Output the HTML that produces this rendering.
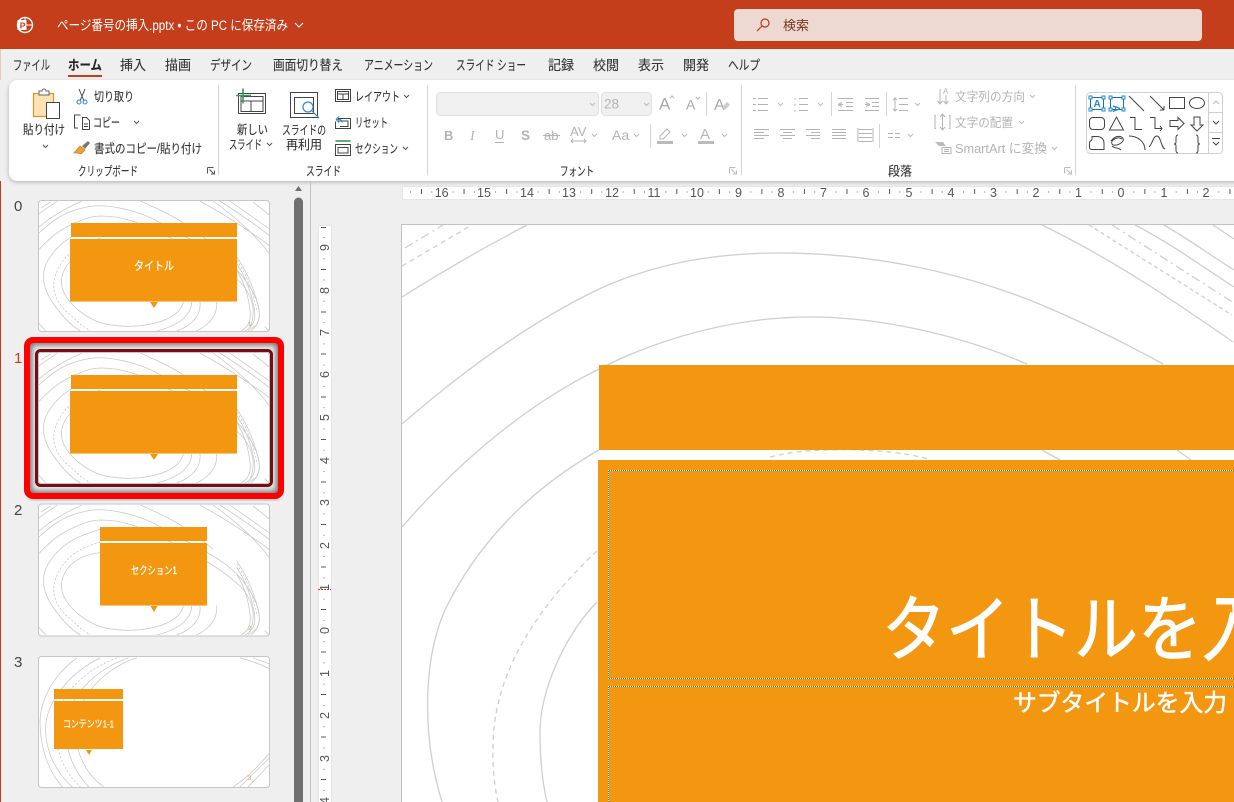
<!DOCTYPE html>
<html lang="ja"><head><meta charset="utf-8"><title>PowerPoint</title>
<style>
html,body{margin:0;padding:0;width:1234px;height:802px;overflow:hidden;background:#efefef}
svg{position:absolute;left:0;top:0;display:block}
text{font-family:"Liberation Sans","Noto Sans CJK JP",sans-serif;font-size:12.500px;fill:#333;stroke:#333;stroke-width:.12}
.tb{font-size:13.500px}
.d{fill:#b4b4b4;stroke:none}
.w{fill:#fff;stroke:none}
.n{font-size:12.500px;fill:#555;stroke:none}
.th{fill:#fff;stroke:#fff;stroke-width:.25}
.i{fill:none;stroke:#444;stroke-width:1}
.g{fill:none;stroke:#b4b4b4;stroke-width:1}
.c{fill:none;stroke:#555;stroke-width:1}
.cg{fill:none;stroke:#bbb;stroke-width:1}
.sp{fill:none;stroke:#cfcfcf;stroke-width:1.3}
.tc path{fill:none;stroke:#c8c8c8;stroke-width:2.300}
.dash{stroke-dasharray:7 5}
.o{fill:#f39610}
</style></head><body>
<svg width="1234" height="802" viewBox="0 0 1234 802" xmlns="http://www.w3.org/2000/svg">
<defs>
<filter id="sh" x="-10%" y="-15%" width="120%" height="130%"><feGaussianBlur stdDeviation="3"/></filter>
<filter id="rs" x="-2%" y="-20%" width="104%" height="140%"><feGaussianBlur stdDeviation="2"/></filter>
<clipPath id="inner"><rect x="27" y="340" width="254" height="156" rx="6"/></clipPath>
<symbol id="c1" viewBox="115 47 693 391" class="tc">
<path d="M115,143C150,110 180,90 209,79C240,68 270,61 293,61C330,61 380,70 421,85C450,95 480,110 520,135C600,180 690,215 740,290C775,340 790,390 770,420L745,438"/>
<path d="M115,193C140,165 175,135 210,119C240,105 265,93 300,92C340,92 380,100 416,114C520,160 650,220 730,300C760,340 770,380 750,430"/>
<path d="M300,120C265,130 235,140 210,156C180,175 150,205 135,240C120,280 130,320 165,365C190,400 215,425 240,438"/>
<path class="dash" d="M300,158C265,168 235,180 209,204C185,225 165,255 160,290C155,325 175,365 215,395C235,415 255,430 270,438"/>
<path d="M300,190C260,195 235,205 209,229C190,250 180,275 183,300C190,350 260,410 330,420C420,435 540,410 550,350"/>
<path d="M575,350C575,385 545,420 470,438M600,350C605,395 570,425 530,438M650,350C655,395 620,425 590,438M711,215C745,265 768,325 778,375C782,405 770,425 755,438"/>
<path d="M711,235C740,280 757,330 765,380C768,410 755,428 735,438M711,255C735,295 748,340 752,385C752,410 745,425 725,438"/>
<path class="dash" d="M711,225C745,275 762,330 772,378"/>
<path d="M421,47C520,90 570,120 640,180M640,47C700,90 770,150 808,205M600,47C680,90 760,145 808,180M690,47C730,75 780,110 808,130M760,50L808,88M660,47C720,85 770,120 808,150"/>
<path d="M115,85L170,47M120,68L150,50M115,125C150,95 200,65 245,47"/>
<path d="M115,415L135,438M795,425L808,438"/>
</symbol>
<symbol id="c3" viewBox="115 485 693 391" class="tc">
<path d="M230,487C170,530 120,600 118,680C118,760 145,830 185,876"/>
<path d="M300,487C210,530 135,620 135,700C135,770 165,830 215,876"/>
<path class="dash" d="M350,487C240,530 165,610 165,700C165,775 195,835 240,876"/>
<path d="M385,487C290,520 200,600 195,700C195,780 230,840 265,876"/>
<path d="M410,487C320,515 230,600 225,700C225,780 260,840 310,876"/>
<path d="M720,487C750,495 780,505 808,520M760,487L808,505"/>
<path d="M700,876C740,850 780,810 808,775M720,876L808,790M745,876L808,810"/>
</symbol>
</defs>

<rect width="1234" height="802" fill="#efefef"/>
<!-- Title bar -->
<rect width="1234" height="49" fill="#c43e1c"/>
<circle cx="25" cy="25" r="7.500" fill="none" stroke="#fff" stroke-width="1.400"/>
<path d="M25,18v7h7" fill="none" stroke="#fff"/>
<rect x="17.500" y="20" width="9" height="10" fill="#fff"/>
<text x="19.700" y="28.600" style="font-size:8.500px;font-weight:700;fill:#c43e1c;stroke:none">P</text>
<text x="57" y="30" textLength="231" lengthAdjust="spacingAndGlyphs" class="w" style="font-size:13.500px">ページ番号の挿入.pptx • この PC に保存済み</text>
<path d="M295,23l4,4l4,-4" fill="none" stroke="#fff" stroke-width="1.100"/>
<rect x="734" y="9" width="468" height="32" rx="4" fill="#eed8d2"/>
<circle cx="765" cy="23" r="4" fill="none" stroke="#b8391a" stroke-width="1.200"/>
<path d="M762,26l-5,5" fill="none" stroke="#b8391a" stroke-width="1.200"/>
<text x="783" y="30" textLength="26" lengthAdjust="spacingAndGlyphs" style="fill:#7a3320;stroke:none;font-size:13px">検索</text>

<!-- Tabs -->
<g>
<text class="tb" x="13" y="70" textLength="37" lengthAdjust="spacingAndGlyphs">ファイル</text>
<text class="tb" x="68" y="70" textLength="34" lengthAdjust="spacingAndGlyphs" style="font-weight:700;fill:#222">ホーム</text>
<text class="tb" x="120" y="70" textLength="26" lengthAdjust="spacingAndGlyphs">挿入</text>
<text class="tb" x="165" y="70" textLength="26" lengthAdjust="spacingAndGlyphs">描画</text>
<text class="tb" x="210" y="70" textLength="42" lengthAdjust="spacingAndGlyphs">デザイン</text>
<text class="tb" x="273" y="70" textLength="70" lengthAdjust="spacingAndGlyphs">画面切り替え</text>
<text class="tb" x="364" y="70" textLength="69" lengthAdjust="spacingAndGlyphs">アニメーション</text>
<text class="tb" x="456" y="70" textLength="70" lengthAdjust="spacingAndGlyphs">スライド ショー</text>
<text class="tb" x="548" y="70" textLength="26" lengthAdjust="spacingAndGlyphs">記録</text>
<text class="tb" x="593" y="70" textLength="26" lengthAdjust="spacingAndGlyphs">校閲</text>
<text class="tb" x="638" y="70" textLength="26" lengthAdjust="spacingAndGlyphs">表示</text>
<text class="tb" x="683" y="70" textLength="26" lengthAdjust="spacingAndGlyphs">開発</text>
<text class="tb" x="728" y="70" textLength="32" lengthAdjust="spacingAndGlyphs">ヘルプ</text>
</g>
<rect x="68" y="75" width="34" height="2" fill="#c43e1c"/>

<!-- Ribbon -->
<rect x="9" y="82" width="1240" height="100" rx="8" fill="#000" opacity=".28" filter="url(#rs)"/>
<rect x="9" y="80" width="1240" height="101" rx="8" fill="#fff"/>
<path d="M218.500,85v90M427.500,85v90M741.500,85v90M1075.500,85v90" stroke="#d4d4d4"/>

<!-- Clipboard -->
<rect x="33.500" y="93.500" width="20" height="23" fill="#fbe3b4" stroke="#e58f24" stroke-width="1.200"/>
<path d="M39,93v-2h3a2,2 0 0 1 4,0h3v4h-10z" fill="#fff" stroke="#666"/>
<path d="M46.500,102.500h13v16h-13z" fill="#fff" stroke="#444"/>
<text x="23" y="134" textLength="42" lengthAdjust="spacingAndGlyphs">貼り付け</text>
<path class="c" d="M43,145l2.500,2.500l2.500,-2.500"/>
<path d="M79,89l5,12M85,89l-5,12" stroke="#555" fill="none"/>
<circle cx="79" cy="102" r="2" fill="none" stroke="#2e8bd0"/><circle cx="85" cy="102" r="2" fill="none" stroke="#2e8bd0"/>
<text x="94" y="101" textLength="40" lengthAdjust="spacingAndGlyphs">切り取り</text>
<path class="i" d="M78,128h-3.500v-13h6M82.500,117.500h4l3,3v9h-7z"/>
<path class="i" d="M84,124h4M84,126.500h4" stroke-width=".8"/>
<text x="93" y="127" textLength="27" lengthAdjust="spacingAndGlyphs">コピー</text>
<path class="c" d="M134,121l2.500,2.500l2.500,-2.500"/>
<path d="M74,153l6,-7l5,4l-4,4l-3,-1z" fill="#f0a030" stroke="#d07a18" stroke-width=".7"/>
<path d="M82,146l6,-5l2,2l-5,6z" fill="#777"/>
<text x="94" y="153" textLength="108" lengthAdjust="spacingAndGlyphs">書式のコピー/貼り付け</text>
<text x="78" y="175.500" textLength="60" lengthAdjust="spacingAndGlyphs">クリップボード</text>
<path class="c" d="M207.500,167.500h6M207.500,167.500v6M209.500,169.500l4,4M214.500,170.500v3.500h-3.500" stroke-width=".9"/>

<!-- Slides group -->
<path fill="#fff" stroke="#444" d="M238.500,93.500h27v20h-27z"/>
<path class="i" d="M241,96.500h22v15h-22zM241,101h22M251,101v10.500"/>
<path d="M236,95.500h15M243,88.500v15" stroke="#2e9e56" stroke-width="1.600"/>
<text x="237" y="134" textLength="31" lengthAdjust="spacingAndGlyphs">新しい</text>
<text x="229" y="149" textLength="33" lengthAdjust="spacingAndGlyphs">スライド</text>
<path class="c" d="M267,143l2.500,2.500l2.500,-2.500"/>
<path class="i" d="M290.500,92.500h27v25h-27z"/>
<path class="i" d="M294.500,97.500h19v16h-19z"/>
<circle cx="308" cy="107" r="5" fill="#fff" stroke="#2e8bd0" stroke-width="1.200"/>
<path d="M312,111l7,7" stroke="#2e8bd0" stroke-width="1.200"/>
<text x="282" y="134.500" textLength="44" lengthAdjust="spacingAndGlyphs">スライドの</text>
<text x="286" y="149" textLength="36" lengthAdjust="spacingAndGlyphs">再利用</text>
<path class="i" d="M335.500,89.500h15v12h-15zM337.500,91.500h11v8h-11zM337.500,94h11M343,94v5.500"/>
<text x="355" y="101" textLength="45" lengthAdjust="spacingAndGlyphs">レイアウト</text>
<path class="c" d="M404,95l2.500,2.500l2.500,-2.500"/>
<path class="i" d="M338,118.500h12.500v10h-15v-7M338,121h10v5.500h-8"/>
<path d="M336,119.500l3,-3M336,119.500l3,3M336,119.500h4a3,3 0 0 1 2,3" fill="none" stroke="#2e8bd0"/>
<text x="355" y="127" textLength="33" lengthAdjust="spacingAndGlyphs">リセット</text>
<path d="M335.500,141h15" stroke="#2e9e56" stroke-width="1.600"/>
<path class="i" d="M335.500,144.500h15v11h-15zM338,147.500h10v5.500h-10z"/>
<text x="355" y="153" textLength="43" lengthAdjust="spacingAndGlyphs">セクション</text>
<path class="c" d="M403,147l2.500,2.500l2.500,-2.500"/>
<text x="306" y="175.500" textLength="35" lengthAdjust="spacingAndGlyphs">スライド</text>

<!-- Font group -->
<rect x="436.500" y="92.500" width="162" height="23" rx="4" fill="#f0f0f0" stroke="#dedede"/>
<rect x="601.500" y="92.500" width="50" height="23" rx="4" fill="#f0f0f0" stroke="#dedede"/>
<text x="604" y="108.500" class="d" style="font-size:13.500px">28</text>
<path class="cg" d="M590,103l2.500,2.500l2.500,-2.500M644,103l2.500,2.500l2.500,-2.500"/>
<text x="659" y="109.500" class="d" style="font-size:17px;fill:#aaa">A</text><path class="g" d="M670,98l2,-2l2,2"/>
<text x="686" y="109.500" class="d" style="font-size:14px;fill:#aaa">A</text><path class="g" d="M696,97l2,2l2,-2"/>
<path d="M706.500,92v24M650.500,124v24M831.500,92v24M886.500,92v24M879.500,124v24" stroke="#d4d4d4"/>
<text x="714" y="110" class="d" style="font-size:16px;fill:#aaa">A</text>
<path d="M723,106l4,-4l3,3l-4,4h-3z" fill="#ccc"/>
<text x="444" y="140" class="d" style="font-weight:700;font-size:13px">B</text>
<text x="470" y="140" class="d" style="font-family:'Liberation Serif',serif;font-style:italic;font-size:14px">I</text>
<text x="495" y="139" class="d" style="font-size:13px">U</text><path class="g" d="M495,142.500h9"/>
<text x="521" y="140" class="d" style="font-weight:700;font-size:13.500px">S</text>
<text x="544" y="140" class="d" style="font-size:13px">ab</text><path class="g" d="M543,135.500h17"/>
<text x="570" y="136" class="d" style="font-size:13px">AV</text><path class="g" d="M571,141h15M573,139l-2,2l2,2M584,139l2,2l-2,2"/>
<path class="cg" d="M592,134l2.500,2.500l2.500,-2.500"/>
<text x="612" y="140" class="d" style="font-size:14px">Aa</text>
<path class="cg" d="M634,134l2.500,2.500l2.500,-2.500"/>
<path d="M660,136l7,-7l3,3l-7,7h-3z" fill="none" stroke="#b4b4b4"/><rect x="657" y="141" width="16" height="3" fill="#bbb"/>
<path class="cg" d="M682,134l2.500,2.500l2.500,-2.500"/>
<text x="700" y="139" class="d" style="font-size:15px">A</text><rect x="698" y="141" width="16" height="3" fill="#bbb"/>
<path class="cg" d="M722,134l2.500,2.500l2.500,-2.500"/>
<text x="560" y="175.500" textLength="34" lengthAdjust="spacingAndGlyphs">フォント</text>
<path class="cg" d="M729.500,167.500h6M729.500,167.500v6M731.500,169.500l4,4M736.500,170.500v3.500h-3.500" stroke-width=".9"/>

<!-- Paragraph -->
<path class="g" d="M758,98.500h10M758,104.500h10M758,110.500h10M753,98.500h3M753,104.500h3M753,110.500h3M799,98.500h9M799,104.500h9M799,110.500h9M795,98v2M795,104v2M795,110v2M838,98.500h15M846,102.500h7M846,106.500h7M838,110.500h15M838,104.500l4,-2M838,104.500l4,2M838,104.500h5M865,98.500h14M872,102.500h7M872,106.500h7M865,110.500h14M870,104.500l-4,-2M870,104.500l-4,2M865,104.500h5M899,98.500h9M899,104.500h9M899,110.500h9M895,98v13M893,100l2,-2l2,2M893,109l2,2l2,-2"/>
<path class="cg" d="M778,103l2.500,2.500l2.500,-2.500M818,103l2.500,2.500l2.500,-2.500M915,103l2.500,2.500l2.500,-2.500"/>
<path class="g" d="M754,129.500h15M754,132.500h10M754,135.500h15M754,138.500h10M780,129.500h15M783,132.500h9M780,135.500h15M783,138.500h9M806,129.500h14M811,132.500h9M806,135.500h14M811,138.500h9M832,129.500h14M832,132.500h14M832,135.500h14M832,138.500h14M858,128v14M873,128v14M859,129.500h13M859,133.500h13M859,137.500h13M859,141.500h13"/>
<path class="g" d="M888,133.500h5M888,137.500h5M895,133.500h5M895,137.500h5"/>
<path class="cg" d="M908,134l2.500,2.500l2.500,-2.500"/>
<path class="g" d="M940,89v15M937.500,101l2.500,3l2.500,-3M946,95v9M943.500,101l2.500,3l2.500,-3"/>
<text x="943" y="94" class="d" style="font-size:8px">A</text>
<text x="955" y="101" textLength="70" lengthAdjust="spacingAndGlyphs" class="d">文字列の方向</text>
<path class="cg" d="M1030,95l2.500,2.500l2.500,-2.500"/>
<path class="g" d="M936,115.500h-1v13h1M949,115.500h1v13h-1M942.500,114v16M940,117l2.500,-3l2.500,3M940,127l2.500,3l2.500,-3"/>
<text x="955" y="127" textLength="58" lengthAdjust="spacingAndGlyphs" class="d">文字の配置</text>
<path class="cg" d="M1019,121l2.500,2.500l2.500,-2.500"/>
<path d="M935,142h8l3,4h-7z" fill="#bbb"/><path class="g" d="M942,147.500h9v6h-9zM944,149.500h5M944,151.500h5"/>
<text x="955" y="153" textLength="92" lengthAdjust="spacingAndGlyphs" class="d" style="font-size:13px">SmartArt に変換</text>
<path class="cg" d="M1052,147l2.500,2.500l2.500,-2.500"/>
<text x="888" y="175.500" textLength="24" lengthAdjust="spacingAndGlyphs">段落</text>
<path class="cg" d="M1064.500,167.500h6M1064.500,167.500v6M1066.500,169.500l4,4M1071.500,170.500v3.500h-3.500" stroke-width=".9"/>

<!-- Shapes gallery -->
<rect x="1086.500" y="92.500" width="136" height="61" rx="4" fill="#fff" stroke="#cfcfcf"/>
<path d="M1208.500,93v60M1209,112.500h14M1209,132.500h14" stroke="#cfcfcf"/>
<path d="M1213,104l3,-3l3,3" fill="none" stroke="#bbb"/>
<path d="M1213,121l3,3l3,-3" fill="none" stroke="#444"/>
<path d="M1212,138.500h8M1213,142l3,3l3,-3" fill="none" stroke="#444"/>
<g fill="none" stroke="#444">
<rect x="1090.500" y="97.500" width="13" height="12" stroke="#1b6fb5"/>
<rect x="1110.500" y="97.500" width="13" height="12" stroke="#1b6fb5"/>
<path d="M1129,96l15,15M1150,96l14,14M1164,110v-4M1164,110h-4"/>
<rect x="1169.500" y="97.500" width="15" height="11"/>
<ellipse cx="1197" cy="103" rx="7.500" ry="5.500"/>
<rect x="1089.500" y="117.500" width="15" height="12" rx="3.500"/>
<path d="M1116.500,117l7,13h-14z"/>
<path d="M1130,117.500h5v12h7M1150,117.500h5v11h7M1160,126l2,2.500l-2,2.500"/>
<path d="M1170,120.500h8v-3l6,6l-6,6v-3h-8zM1194,117h6v8h3l-6,6l-6,-6h3z"/>
<path d="M1092,136.500h6q6,1 6,7v6h-12q-2.500,0 -2.500,-2.500v-4q0,-2 2,-2.500q1,-2 .5,-4z"/>
<path d="M1111,141c6,-8 14,-4 12,0c-2,3 -9,6 -11,3c-2,-4 6,-8 10,-5M1112,146c3,3 6,1 9,4"/>
<path d="M1129,136C1138,136 1145,142 1145,150M1149,147C1153,143 1153,136 1157,136C1161,136 1161,148 1165,149"/>
<path d="M1178,135q-2,0 -2,3v4q0,2 -2,2q2,0 2,2v4q0,3 2,3M1196,135q2,0 2,3v4q0,2 2,2q-2,0 -2,2v4q0,3 -2,3"/>
</g>
<g stroke="#1b8ad0" fill="#fff"><rect x="1089" y="96" width="3" height="3"/><rect x="1102" y="96" width="3" height="3"/><rect x="1089" y="108" width="3" height="3"/><rect x="1102" y="108" width="3" height="3"/><rect x="1109" y="96" width="3" height="3"/><rect x="1122" y="96" width="3" height="3"/><rect x="1109" y="108" width="3" height="3"/><rect x="1122" y="108" width="3" height="3"/></g>
<text x="1093.500" y="107" style="font-size:10px;font-weight:700;fill:#1b8ad0;stroke:none">A</text>
<text x="1119" y="107" transform="rotate(90 1117 103)" style="font-size:10px;font-weight:700;fill:#1b8ad0;stroke:none">A</text>

<!-- Left edge -->
<rect x="0" y="181" width="1" height="621" fill="#c43e1c"/>
<rect x="0" y="49" width="1" height="31" fill="#e8c9c0"/>

<!-- Thumbnail panel -->
<text x="14" y="211" style="font-size:15px;fill:#444;stroke:none">0</text>
<text x="14" y="363" style="font-size:15px;fill:#c43e1c;stroke:none">1</text>
<text x="14" y="515" style="font-size:15px;fill:#444;stroke:none">2</text>
<text x="14" y="667" style="font-size:15px;fill:#444;stroke:none">3</text>

<!-- scrollbar -->
<path d="M295,191l3.500,-5l3.500,5z" fill="#707070"/>
<path d="M294,802V202a4.500,4.500 0 0 1 9,0V802z" fill="#707070"/>
<rect x="310" y="181" width="1" height="621" fill="#c2c2c2"/>

<!-- thumb 0 -->
<rect x="38.500" y="200.500" width="231" height="131" rx="3" fill="#fff" stroke="#c6c6c6"/>
<use href="#c1" x="39" y="201" width="230" height="130"/>
<rect x="71" y="223" width="166" height="14" class="o"/><rect x="70" y="239" width="167" height="62" class="o"/><rect x="70" y="301" width="167" height="1" fill="#f9c67e"/>
<path d="M150,302h8l-4,6z" class="o"/>
<text x="134" y="270" textLength="40" lengthAdjust="spacingAndGlyphs" class="th" style="font-size:12px">タイトル</text>
<text x="248" y="326" style="font-size:6px;fill:#f39610;stroke:none">1</text>

<!-- selection -->
<rect x="30" y="497" width="248" height="3" fill="#555" opacity=".5" filter="url(#rs)"/>
<g clip-path="url(#inner)"><rect x="27" y="340" width="254" height="156" rx="7" fill="none" stroke="#444" stroke-width="10" opacity=".75" filter="url(#sh)"/></g>
<rect x="38.500" y="352.500" width="231" height="131" rx="3" fill="#fff" stroke="#c6c6c6"/>
<use href="#c1" x="39" y="353" width="230" height="130"/>
<rect x="71" y="375" width="166" height="14" class="o"/><rect x="70" y="391" width="167" height="62" class="o"/><rect x="70" y="453" width="167" height="1" fill="#f9c67e"/>
<path d="M150,454h8l-4,6z" class="o"/>
<rect x="36.500" y="350.500" width="235" height="135" rx="4" fill="none" stroke="#750d13" stroke-width="3"/>
<rect x="27" y="340" width="254" height="156" rx="6" fill="none" stroke="#ff0000" stroke-width="6"/>

<!-- thumb 2 -->
<path d="M38.500,507a3,3 0 0 1 3,-3h225a3,3 0 0 1 3,3v126a3,3 0 0 1 -3,3h-225a3,3 0 0 1 -3,-3z" fill="#fff" stroke="#c6c6c6"/>
<use href="#c1" x="39" y="505" width="230" height="130"/>
<rect x="100" y="527" width="107" height="14" class="o"/><rect x="100" y="543" width="107" height="62" class="o"/><rect x="100" y="605" width="107" height="1" fill="#f9c67e"/>
<path d="M150.500,606h7l-3.500,6z" class="o"/>
<text x="131" y="574" textLength="46" lengthAdjust="spacingAndGlyphs" class="th" style="font-size:11px">セクション1</text>
<text x="248" y="630" style="font-size:6px;fill:#e9a866;stroke:none">2</text>

<!-- thumb 3 -->
<rect x="38.500" y="656.500" width="231" height="131" rx="3" fill="#fff" stroke="#c6c6c6"/>
<use href="#c3" x="39" y="657" width="230" height="130"/>
<rect x="54" y="689" width="69" height="10" class="o"/><rect x="54" y="701" width="69" height="48" class="o"/>
<path d="M86,750h6l-3,5z" class="o"/>
<text x="63" y="727.500" textLength="51" lengthAdjust="spacingAndGlyphs" class="th" style="font-size:10px">コンテンツ1-1</text>
<text x="248" y="780" style="font-size:6px;fill:#d99a4e;stroke:none">3</text>

<!-- Horizontal ruler -->
<rect x="402.500" y="186.500" width="832" height="13" fill="#fff" stroke="#e6e6e6"/>
<line x1="421" y1="191.500" x2="1234" y2="191.500" stroke="#555" stroke-width="5" stroke-dasharray="1 41.55"/>
<line x1="410" y1="192" x2="1234" y2="192" stroke="#888" stroke-width="1.200" stroke-dasharray="1 20.27"/>
<g text-anchor="middle">
<text class="n" x="441.700" y="197">16</text><text class="n" x="484" y="197">15</text><text class="n" x="527" y="197">14</text><text class="n" x="569" y="197">13</text><text class="n" x="612" y="197">12</text><text class="n" x="654" y="197">11</text><text class="n" x="697" y="197">10</text><text class="n" x="738.500" y="197">9</text><text class="n" x="781" y="197">8</text><text class="n" x="823.500" y="197">7</text><text class="n" x="866" y="197">6</text><text class="n" x="909" y="197">5</text><text class="n" x="951" y="197">4</text><text class="n" x="993.500" y="197">3</text><text class="n" x="1036" y="197">2</text><text class="n" x="1078.500" y="197">1</text><text class="n" x="1121" y="197">0</text><text class="n" x="1164" y="197">1</text><text class="n" x="1206" y="197">2</text>
</g>

<!-- Vertical ruler -->
<rect x="318.500" y="225.500" width="13" height="580" fill="#fff" stroke="#e6e6e6"/>
<path stroke="#555" d="M321,227.500h5M321,269.500h5M321,312h5M321,354h5M321,397h5M321,439.500h5M321,482h5M321,524.500h5M321,567h5M321,609.500h5M321,652h5M321,694.500h5M321,737h5M321,779.500h5"/>
<line x1="324" y1="237" x2="324" y2="802" stroke="#888" stroke-width="1.200" stroke-dasharray="1 20.27"/>
<g>
<text class="n" transform="translate(329,251) rotate(-90)">9</text>
<text class="n" transform="translate(329,294) rotate(-90)">8</text>
<text class="n" transform="translate(329,336) rotate(-90)">7</text>
<text class="n" transform="translate(329,378) rotate(-90)">6</text>
<text class="n" transform="translate(329,421) rotate(-90)">5</text>
<text class="n" transform="translate(329,464) rotate(-90)">4</text>
<text class="n" transform="translate(329,506) rotate(-90)">3</text>
<text class="n" transform="translate(329,549) rotate(-90)">2</text>
<text class="n" transform="translate(329,591) rotate(-90)">1</text>
<text class="n" transform="translate(329,634) rotate(-90)">0</text>
<text class="n" transform="translate(329,677) rotate(-90)">1</text>
<text class="n" transform="translate(329,719) rotate(-90)">2</text>
<text class="n" transform="translate(329,762) rotate(-90)">3</text>
<text class="n" transform="translate(329,804) rotate(-90)">4</text>
</g>
<line x1="318" y1="589.500" x2="331" y2="589.500" stroke="#c43e1c" stroke-dasharray="2 1"/>

<!-- Main slide -->
<rect x="401" y="224" width="833" height="578" fill="#fff"/>
<path d="M401.500,802V224.500H1234" fill="none" stroke="#c2c2c2"/>
<g class="sp">
<path d="M402,297C440,273 485,247 527,225"/>
<path d="M402,424C470,365 535,320 597,290C655,263 715,253 780,253C860,253 950,268 1037,303C1085,323 1125,343 1163,364"/>
<path d="M402,527C465,455 530,403 599,369C660,338 735,317 810,317C880,317 960,335 1027,364"/>
<path d="M599,450C525,492 475,548 445,610C425,655 420,730 442,802"/>
<path d="M597,602C565,635 540,690 540,733C540,760 543,785 547,802"/>
<path d="M1042,225C1110,258 1170,298 1233,342"/>
<path d="M1135,225C1170,243 1200,265 1234,287M1164,225C1190,240 1210,255 1234,270M1213,225L1234,239"/>
<path d="M1042,450L1060,460M1177,450L1191,460"/>
<path stroke-dasharray="5 4" d="M597,551C555,590 505,650 495,720C491,750 493,780 498,802"/>
<path stroke-dasharray="5 4" d="M402,266L472,225"/>
<path stroke-dasharray="9 4 2 4" d="M405,248L443,225"/>
<path stroke-dasharray="4 3" d="M1089,225L1232,315"/>
<path stroke-dasharray="9 4 2 4" d="M1112,225L1234,303"/>
<path stroke-dasharray="5 4" d="M770,457C790,452 810,450 830,450C860,449 900,451 928,459"/>
</g>
<rect x="599" y="365" width="635" height="85" class="o"/>
<rect x="598" y="460" width="636" height="342" class="o"/>
<g fill="none">
<path stroke="#666" d="M608,470.500H1234M608,678.500H1234M608,686.500H1234M608.500,470V679M608.500,686V802"/>
<path stroke="#fff" stroke-dasharray="1 1" d="M608,470.500H1234M608,678.500H1234M608,686.500H1234M608.500,470V679M608.500,686V802"/>
</g>
<text x="882" y="655" textLength="384" lengthAdjust="spacingAndGlyphs" class="w" style="font-size:72px;stroke:#fff;stroke-width:1">タイトルを入</text>
<text x="1013" y="711" textLength="214" lengthAdjust="spacingAndGlyphs" class="w" style="font-size:24px;stroke:#fff;stroke-width:.5">サブタイトルを入力</text>
</svg>
</body></html>
